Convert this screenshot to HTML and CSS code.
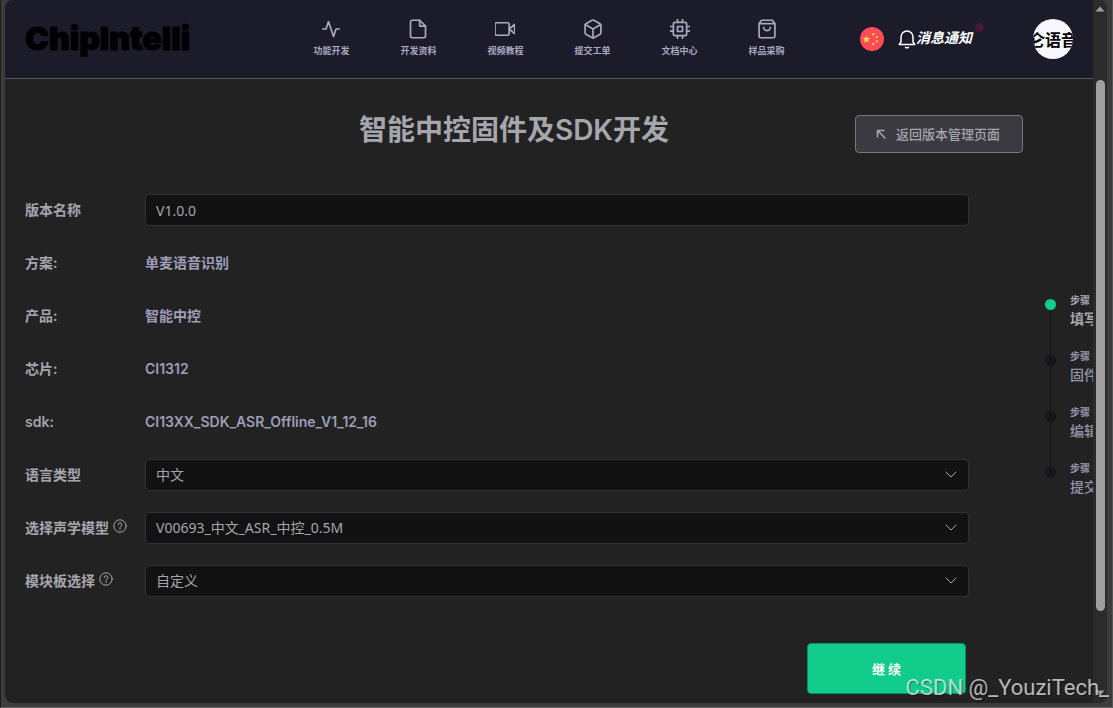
FILE: index.html
```html
<!DOCTYPE html>
<html lang="zh-CN">
<head>
<meta charset="utf-8">
<meta name="viewport" content="width=device-width, initial-scale=1">
<title>智能中控固件及SDK开发</title>
<link rel="stylesheet" href="styles.css">
</head>
<body>
<div class="window">
  <div class="page">
    <header class="header">
      <a class="logo" href="#">ChipIntelli</a>
      <nav class="nav">
        <a class="nav-item" href="#">
          <svg class="icon" viewBox="0 0 24 24"><path d="M22 12h-4l-3 9L9 3l-3 9H2"/></svg>
          <span>功能开发</span>
        </a>
        <a class="nav-item" href="#">
          <svg class="icon" viewBox="0 0 24 24"><path d="M14 1.500H5a2 2 0 0 0-2 2v17a2 2 0 0 0 2 2h14a2 2 0 0 0 2-2V8.500z"/><path d="M14 1.500v7h7"/></svg>
          <span>开发资料</span>
        </a>
        <a class="nav-item" href="#">
          <svg class="icon" viewBox="0 0 24 24"><path d="M23.500 6.500 17 12l6.500 5.500z"/><rect x="0" y="4.500" width="17" height="15" rx="2"/></svg>
          <span>视频教程</span>
        </a>
        <a class="nav-item" href="#">
          <svg class="icon" viewBox="0 0 24 24"><path d="M21.500 16.500v-9a2 2 0 0 0-1-1.700l-7.500-4.300a2 2 0 0 0-2 0L3.500 5.800a2 2 0 0 0-1 1.700v9a2 2 0 0 0 1 1.700l7.500 4.300a2 2 0 0 0 2 0l7.500-4.300a2 2 0 0 0 1-1.700z"/><path d="M2.800 6.700 12 12l9.200-5.300M12 22.500V12"/></svg>
          <span>提交工单</span>
        </a>
        <a class="nav-item" href="#">
          <svg class="icon" viewBox="0 0 24 24"><rect x="4" y="4" width="16" height="16" rx="2"/><rect x="9" y="9" width="6" height="6"/><path d="M9 0.500V4M15 0.500V4M9 20v3.500M15 20v3.500M20 9h3.500M20 14.500h3.500M0.500 9H4M0.500 14.500H4"/></svg>
          <span>文档中心</span>
        </a>
        <a class="nav-item" href="#">
          <svg class="icon" viewBox="0 0 24 24"><path d="M5.500 1.500 2.500 5.500v15a2 2 0 0 0 2 2h15a2 2 0 0 0 2-2v-15l-3-4zM2.500 5.500h19M16 10a4 4 0 0 1-8 0"/></svg>
          <span>样品采购</span>
        </a>
      </nav>
      <div class="tools">
        <button class="flag" type="button" aria-label="中文">
          <svg viewBox="0 0 24 24"><circle cx="12" cy="12" r="12" fill="#ff4b55"/><g fill="#ffe15a"><path d="m6.400 8 1 2.900h3.100L8 12.700l1 3-2.600-1.800-2.600 1.800 1-3-2.500-1.800h3.100z"/><path d="m13.300 5.500.5 1.100 1.200.1-.9.800.3 1.200-1.100-.6-1 .6.200-1.200-.9-.8 1.200-.1zM17 8.200l.4 1 1.100.1-.8.700.2 1.100-.9-.5-1 .5.200-1.100-.8-.7 1.100-.1zM17 12.700l.4 1 1.100.1-.8.700.2 1.100-.9-.5-1 .5.200-1.100-.8-.7 1.100-.1zM13.300 15.300l.5 1.100 1.200.1-.9.800.3 1.200-1.100-.6-1 .6.200-1.200-.9-.8 1.200-.1z"/></g></svg>
        </button>
        <a class="notice" href="#">
          <svg class="bell" viewBox="0 0 18 20"><path d="M1.200 15.500h15.600M1.200 15.500 3 13V8a6 6 0 0 1 12 0v5l1.800 2.500"/><path d="M7.500 18.300q1.500 1 3 0"/></svg>
          <em>消息通知</em>
          <span class="notice-dot"></span>
        </a>
        <button class="avatar" type="button"><span>仑语音</span></button>
      </div>
    </header>

    <main class="main">
      <div class="title-row">
        <h1 class="title">智能中控固件及SDK开发</h1>
        <button class="back" type="button">
          <svg class="back-icon" viewBox="0 0 10 10"><path d="M1.500 8V1.500H8M1.500 1.500 9 9"/></svg>
          返回版本管理页面
        </button>
      </div>

      <div class="content">
        <form class="form">
          <label class="label" for="version">版本名称</label>
          <input class="control" id="version" type="text" value="V1.0.0">

          <span class="label">方案:</span>
          <span class="value">单麦语音识别</span>

          <span class="label">产品:</span>
          <span class="value">智能中控</span>

          <span class="label">芯片:</span>
          <span class="value">CI1312</span>

          <span class="label">sdk:</span>
          <span class="value">CI13XX_SDK_ASR_Offline_V1_12_16</span>

          <label class="label" for="language">语言类型</label>
          <div class="select">
            <select class="control" id="language"><option>中文</option></select>
            <svg class="chevron" viewBox="0 0 12 8"><path d="m1 1 5 5 5-5"/></svg>
          </div>

          <label class="label" for="model">选择声学模型
            <svg class="help" viewBox="0 0 14 14"><circle cx="7" cy="7" r="6.200"/><path d="M5.200 5.600a1.800 1.800 0 1 1 2.700 1.500c-.6.300-.9.600-.9 1.200M7 9.600v1"/></svg>
          </label>
          <div class="select">
            <select class="control" id="model"><option>V00693_中文_ASR_中控_0.5M</option></select>
            <svg class="chevron" viewBox="0 0 12 8"><path d="m1 1 5 5 5-5"/></svg>
          </div>

          <label class="label" for="board">模块板选择
            <svg class="help" viewBox="0 0 14 14"><circle cx="7" cy="7" r="6.200"/><path d="M5.200 5.600a1.800 1.800 0 1 1 2.700 1.500c-.6.300-.9.600-.9 1.200M7 9.600v1"/></svg>
          </label>
          <div class="select">
            <select class="control" id="board"><option>自定义</option></select>
            <svg class="chevron" viewBox="0 0 12 8"><path d="m1 1 5 5 5-5"/></svg>
          </div>

          <button class="submit" type="submit">继 续</button>
        </form>

        <ol class="steps">
          <li class="step step-active"><small>步骤</small><span>填写</span></li>
          <li class="step"><small>步骤</small><span>固件</span></li>
          <li class="step"><small>步骤</small><span>编辑</span></li>
          <li class="step"><small>步骤</small><span>提交</span></li>
        </ol>
      </div>
    </main>
  </div>

  <div class="scrollbar">
    <svg class="arrow" viewBox="0 0 10 6"><path d="M5 0.500 9.500 5.500h-9z"/></svg>
    <div class="track"><div class="thumb"></div></div>
    <svg class="arrow" viewBox="0 0 10 6"><path d="M5 5.500 9.500 0.500h-9z"/></svg>
  </div>
</div>
<div class="watermark">CSDN @_YouziTech_</div>
</body>
</html>
```

FILE: styles.css
```css
* {
  box-sizing: border-box;
}

body {
  margin: 0;
  min-height: 100vh;
  display: flex;
  padding: 0 5px 4px 4px;
  background: #3c3c3c;
  border-left: 1px solid #1d1d1d;
  border-right: 1px solid #555;
  border-bottom: 1px solid #666;
  color: #a6a6af;
  font: 14px/20px "Noto Sans", "Noto Sans CJK SC", sans-serif;
}

button,
input,
select {
  font: inherit;
  color: inherit;
}

a {
  color: inherit;
  text-decoration: none;
}

svg {
  fill: none;
  stroke: currentColor;
  stroke-linecap: round;
  stroke-linejoin: round;
}

.window {
  flex: 1;
  min-width: 0;
  display: flex;
  overflow: hidden;
  border-radius: 8px;
  background: #222;
}

.page {
  flex: 1;
  min-width: 0;
}

.header {
  display: grid;
  grid-template-columns: 1fr auto 1fr;
  align-items: center;
  height: 79px;
  padding: 0 20px;
  background: #1b1b29;
  border-bottom: 1px solid #5a5a5e;
}

.logo {
  color: #000;
  font: 900 32px/40px Inter, sans-serif;
  -webkit-text-stroke: 1px #000;
}

.nav {
  display: flex;
  gap: 51px;
  padding-bottom: 2px;
  color: #a9a9c2;
}

.nav-item {
  display: flex;
  flex-direction: column;
  align-items: center;
  gap: 5px;
  font: 700 9px/14px "Noto Sans CJK SC", sans-serif;
}

.icon {
  width: 20px;
  height: 20px;
  stroke-width: 2;
}

.tools {
  display: flex;
  align-items: center;
  justify-content: flex-end;
}

.flag {
  width: 24px;
  height: 24px;
  padding: 0;
  border: 0;
  background: none;
}

.flag svg {
  display: block;
  stroke: none;
}

.notice {
  position: relative;
  display: flex;
  align-items: center;
  margin: 0 60px 0 14px;
  color: #fff;
  font: 700 14px/24px "Noto Sans CJK SC", sans-serif;
}

.notice em {
  padding: 0 1px 5px 0;
}

.bell {
  width: 18px;
  height: 20px;
  stroke-width: 1.5;
}

.notice-dot {
  position: absolute;
  top: -2px;
  right: -11px;
  width: 9px;
  height: 9px;
  border-radius: 50%;
  background: #461a35;
}

.avatar {
  width: 40px;
  height: 40px;
  padding: 0;
  display: flex;
  justify-content: center;
  align-items: center;
  overflow: hidden;
  border: 0;
  border-radius: 50%;
  background: #f7f7ff;
  color: #000;
  font: 700 16px/24px "Noto Sans CJK SC", sans-serif;
  white-space: nowrap;
}

.title-row {
  display: grid;
  grid-template-columns: 1fr auto 1fr;
  padding: 31px 70px 0 0;
}

.title {
  grid-column: 2;
  margin: 0;
  font: 600 28px/40px Inter, "Noto Sans CJK SC", sans-serif;
}

.back {
  justify-self: end;
  align-self: end;
  display: flex;
  align-items: center;
  gap: 10px;
  height: 38px;
  margin-top: 5px;
  padding: 0 22px 0 20px;
  border: 1px solid #77777d;
  border-radius: 4px;
  background: #3b3a40;
  font: 500 13px/20px "Noto Sans CJK SC", sans-serif;
}

.back-icon {
  width: 10px;
  height: 10px;
  stroke-width: 1.5;
}

.content {
  display: flex;
  align-items: flex-start;
  padding-left: 20px;
  padding-top: 41px;
  overflow: hidden;
}

.form {
  flex: 1;
  min-width: 0;
  display: grid;
  grid-template-columns: 120px 1fr;
  grid-template-rows: repeat(8, 32px) auto;
  row-gap: 21px;
  align-items: center;
}

.label,
.value {
  font: 600 14px/20px Inter, "Noto Sans CJK SC", sans-serif;
}

.label {
  display: flex;
  align-items: center;
  gap: 4px;
}

.value {
  color: #9e9eb8;
}

.help {
  width: 14px;
  height: 14px;
  margin-bottom: 4px;
  stroke-width: 1;
}

.control {
  display: block;
  width: 100%;
  height: 32px;
  padding: 0 10px;
  border: 1px solid #303036;
  border-radius: 4px;
  background: #121212;
  outline: 0;
  appearance: none;
}

.select {
  position: relative;
}

.chevron {
  position: absolute;
  top: 12px;
  right: 12px;
  width: 12px;
  height: 8px;
  stroke-width: 1;
  pointer-events: none;
}

.submit {
  grid-column: 2;
  justify-self: end;
  width: 159px;
  height: 51px;
  margin: 25px 3px 0 0;
  border: 1px solid #0b8f5c;
  border-radius: 4px;
  background: #12cc8c;
  color: #fff;
  font: 700 13px/20px "Noto Sans CJK SC", sans-serif;
}

.steps {
  width: 48px;
  margin: 98px 0 0 76px;
  padding: 0;
  list-style: none;
}

.step {
  position: relative;
  display: flex;
  flex-direction: column;
  height: 56px;
  padding-left: 25px;
  color: #9595ab;
  font: 500 14px/20px "Noto Sans CJK SC", sans-serif;
  white-space: nowrap;
}

.step small {
  font-size: 10px;
  font-weight: 700;
  line-height: 16px;
}

.step::before {
  content: "";
  position: absolute;
  z-index: 1;
  top: 7px;
  left: 0;
  width: 11px;
  height: 11px;
  border-radius: 50%;
  background: #161618;
}

.step:not(:last-child)::after {
  content: "";
  position: absolute;
  top: 18px;
  left: 5px;
  width: 1px;
  height: 45px;
  background: #121214;
}

.step-active {
  color: #a6a6af;
  font-weight: 700;
}

.step-active::before {
  background: #12cc8c;
}

.scrollbar {
  width: 14px;
  display: flex;
  flex-direction: column;
  align-items: center;
  padding: 6px 0 7px;
  background: #2b2b2b;
}

.arrow {
  width: 10px;
  height: 6px;
  fill: #9f9f9f;
  stroke: none;
}

.track {
  flex: 1;
  width: 9px;
  padding: 68px 0 0;
  display: flex;
  flex-direction: column;
}

.thumb {
  height: 87%;
  border-radius: 5px;
  background: #9f9f9f;
}

.watermark {
  position: absolute;
  right: 4px;
  bottom: 6px;
  color: rgba(255, 255, 255, 0.7);
  font: 22px/28px Roboto, sans-serif;
  text-shadow: 1px 1px 1px rgba(0, 0, 0, 0.4);
  pointer-events: none;
}
```
